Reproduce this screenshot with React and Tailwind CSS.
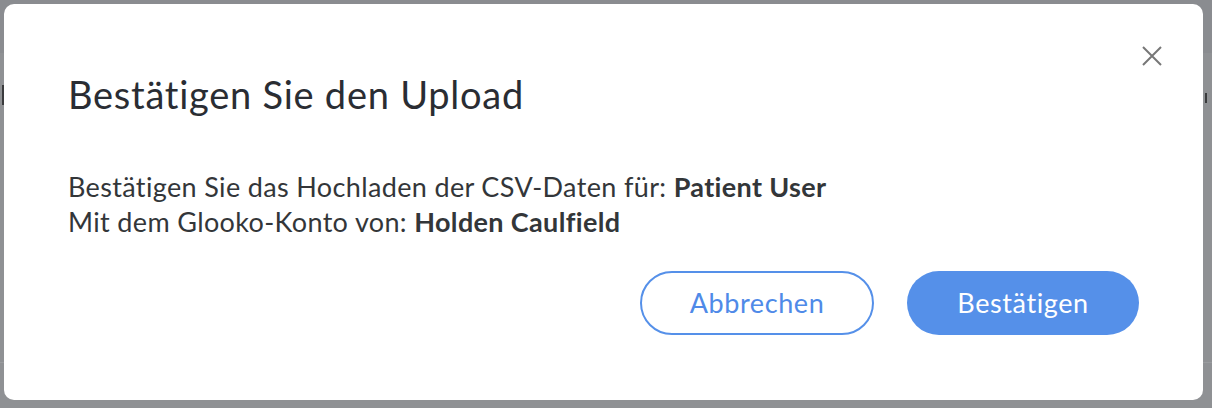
const App = () => {
  return (
    <div className="relative h-[408px] w-[1212px] overflow-hidden bg-[#8f9194] font-['Lato',sans-serif]">
      {/* page behind the overlay */}
      <div className="h-[53px] bg-[#8a8c90]" />
      <div className="flex h-[310px] justify-between border-b border-[#9a9c9f]">
        <div className="ml-[2px] mt-[32px] h-[20px] w-[2px] bg-[#3a3b3d]" />
        <div className="mr-[5px] mt-[40px] h-[10px] w-[2px] bg-[#3a3b3d]" />
      </div>

      {/* dialog */}
      <div className="absolute left-[4px] top-[4px] flex h-[396px] w-[1199px] flex-col rounded-[10px] bg-white pl-[64px] pr-[64px]">
        <button className="absolute right-[41px] top-[42px] text-[#777777]">
          <svg width="20" height="20" viewBox="0 0 20 20" fill="none" stroke="currentColor" strokeWidth="2">
            <path d="M1 1 L19 19 M19 1 L1 19" />
          </svg>
        </button>
        <h2 className="mt-[67px] text-[38px] leading-[46px] font-normal tracking-[0.75px] text-[#2a2d33]">
          Bestätigen Sie den Upload
        </h2>
        <div className="mt-[52px] text-[27px] leading-[35px] tracking-[0.35px] text-[#333639]">
          <p>
            Bestätigen Sie das Hochladen der CSV-Daten für: <span className="font-bold">Patient User</span>
          </p>
          <p>
            Mit dem Glooko-Konto von: <span className="font-bold">Holden Caulfield</span>
          </p>
        </div>
        <div className="mt-[32px] flex justify-end gap-[33px]">
          <button className="h-[64px] w-[234px] rounded-full border-2 border-[#5590e9] bg-white text-[27px] tracking-[0.6px] text-[#4f8ae8]">
            Abbrechen
          </button>
          <button className="h-[64px] w-[232px] rounded-full bg-[#5590e9] text-[27px] tracking-[0.6px] text-white">
            Bestätigen
          </button>
        </div>
      </div>
    </div>
  );
};

export default App;
